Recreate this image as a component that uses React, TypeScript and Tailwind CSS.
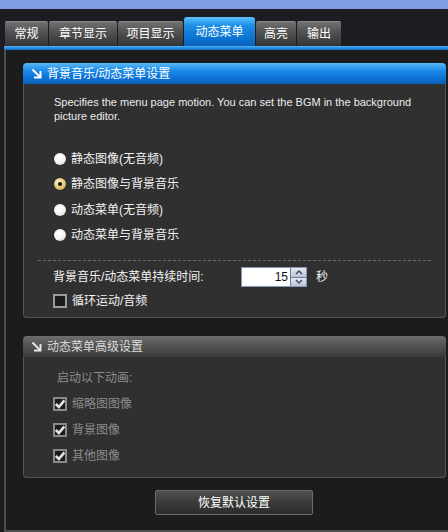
import React from 'react';

const font = { fontFamily: '"Liberation Sans", "Noto Sans CJK SC", sans-serif' };

// 分组标题左边的小箭头
const CornerArrow: React.FC<{ color: string }> = ({ color }) => (
  <svg width="11" height="11" viewBox="0 0 11 11" className="shrink-0">
    <path d="M1.5 1.5 L9 9" stroke={color} strokeWidth="2" fill="none" />
    <path d="M9.5 3 V9.5 H3" stroke={color} strokeWidth="2" fill="none" />
  </svg>
);

const Radio: React.FC<{ label: string; checked?: boolean }> = ({ label, checked }) => (
  <div className="flex items-center h-[25.5px] pl-[30px]">
    {checked ? (
      <div className="w-[12px] h-[12px] rounded-full bg-[radial-gradient(circle_at_40%_35%,#fff6c8,#d8b85a_70%,#9a7d2a)] flex items-center justify-center">
        <div className="w-[4px] h-[4px] rounded-full bg-[#111]" />
      </div>
    ) : (
      <div className="w-[12px] h-[12px] rounded-full bg-[radial-gradient(circle_at_40%_35%,#ffffff,#f2f2f2_55%,#b8b8b8)]" />
    )}
    <span className="ml-[5px] text-[12px] text-[#f2f2f2] leading-none">{label}</span>
  </div>
);

const Check: React.FC<{ label: string; checked?: boolean; dim?: boolean }> = ({ label, checked, dim }) => (
  <div className="flex items-center h-[26px] pl-[29px]">
    <div
      className={`w-[14px] h-[14px] border-2 ${dim ? 'border-[#8a8a8a]' : 'border-[#9c9c9c]'} bg-[#1c1c1c] flex items-center justify-center`}
    >
      {checked && (
        <svg width="10" height="10" viewBox="0 0 10 10">
          <path d="M0.8 5 L3.8 8 L9.4 1.4" stroke={dim ? '#e2e2e2' : '#fff'} strokeWidth="2.6" fill="none" />
        </svg>
      )}
    </div>
    <span className={`ml-[5px] text-[12px] leading-none ${dim ? 'text-[#8c8c8c]' : 'text-[#f2f2f2]'}`}>{label}</span>
  </div>
);

const tabs = ['常规', '章节显示', '项目显示', '动态菜单', '高亮', '输出'];
const tabWidths = ['w-[43px]', 'w-[68px]', 'w-[65px]', 'w-[71px]', 'w-[40px]', 'w-[44px]'];

export default function App() {
  return (
    <div className="w-[448px] h-[532px] bg-[#1d1c22] overflow-hidden flex flex-col" style={font}>
      {/* 窗口标题栏残留 */}
      <div className="h-[9px] bg-[#7f9ee3]" />

      {/* 选项卡 */}
      <div className="h-[37px] flex items-end gap-[1px] pl-[5px]">
        {tabs.map((t, i) =>
          i === 3 ? (
            <div
              key={t}
              className={`${tabWidths[i]} h-[29px] rounded-t-[3px] bg-[linear-gradient(#5cc0ff,#1c8ee6_30%,#0a6fcd_80%,#0b61b8)] flex items-center justify-center text-[12px] text-white`}
            >
              {t}
            </div>
          ) : (
            <div
              key={t}
              className={`${tabWidths[i]} h-[25px] rounded-t-[2px] bg-[linear-gradient(#707070,#4d4d4d_50%,#343434)] border-t border-[#8a8a8a] flex items-center justify-center text-[12px] text-white`}
            >
              {t}
            </div>
          )
        )}
      </div>
      <div className="h-[4px] ml-[4px] bg-[linear-gradient(#4ab0f5,#0b6fcd)]" />

      {/* 主面板 */}
      <div className="flex-1 ml-[4px] border-l-2 border-b-2 border-[#4e4e4e] bg-[#1c1c1c] pl-[17px] pr-[2px] pt-[13px] flex flex-col">
        {/* 背景音乐/动态菜单设置 */}
        <div className="flex flex-col">
          <div className="h-[21px] rounded-t-[4px] bg-[linear-gradient(#5ab8f8,#1d8ce8_35%,#0a6fd3_75%,#0b5fb5)] flex items-center gap-[5px] pl-[8px] text-[12px] text-white">
            <CornerArrow color="#ffffff" />
            <span>背景音乐/动态菜单设置</span>
          </div>
          <div className="h-[234px] bg-[#303030] border border-t-0 border-[#555] rounded-b-[4px] pt-[11px] flex flex-col">
            <p className="pl-[30px] pr-[20px] text-[11px] leading-[14px] text-[#ececec]">
              Specifies the menu page motion. You can set the BGM in the background picture editor.
            </p>
            <div className="mt-[23px] flex flex-col">
              <Radio label="静态图像(无音频)" />
              <Radio label="静态图像与背景音乐" checked />
              <Radio label="动态菜单(无音频)" />
              <Radio label="动态菜单与背景音乐" />
            </div>
            <div className="mt-[12px] mx-[14px] border-t border-dashed border-[#6a6a6a]" />
            <div className="mt-[6px] flex items-center h-[20px] pl-[29px]">
              <span className="w-[188px] text-[12px] text-[#f2f2f2]">背景音乐/动态菜单持续时间:</span>
              <div className="flex h-[20px] border border-[#8797b4] bg-white">
                <div className="w-[48px] flex items-center justify-end pr-[2px] text-[12px] text-[#111]">15</div>
                <div className="w-[16px] flex flex-col border-l border-[#6e7d96]">
                  <div className="flex-1 bg-[linear-gradient(#e4e9f2,#b9c3d4)] border-b border-[#6e7d96] flex items-center justify-center">
                    <svg width="8" height="5" viewBox="0 0 8 5">
                      <path d="M1 4 L4 1 L7 4" stroke="#44506a" strokeWidth="1.5" fill="none" />
                    </svg>
                  </div>
                  <div className="flex-1 bg-[linear-gradient(#e4e9f2,#b9c3d4)] flex items-center justify-center">
                    <svg width="8" height="5" viewBox="0 0 8 5">
                      <path d="M1 1 L4 4 L7 1" stroke="#44506a" strokeWidth="1.5" fill="none" />
                    </svg>
                  </div>
                </div>
              </div>
              <span className="ml-[9px] text-[12px] text-[#f2f2f2]">秒</span>
            </div>
            <div className="mt-[1px]">
              <Check label="循环运动/音频" />
            </div>
          </div>
        </div>

        {/* 动态菜单高级设置 */}
        <div className="mt-[18px] flex flex-col">
          <div className="h-[21px] rounded-t-[4px] bg-[linear-gradient(#6e6e6e,#565656_40%,#444_80%,#3a3a3a)] flex items-center gap-[5px] pl-[8px] text-[12px] text-[#dcdcdc]">
            <CornerArrow color="#e6e6e6" />
            <span>动态菜单高级设置</span>
          </div>
          <div className="h-[121px] bg-[#303030] border border-t-0 border-[#555] rounded-b-[4px] pt-[14px] flex flex-col">
            <span className="pl-[33px] text-[12px] leading-[14px] text-[#8c8c8c]">启动以下动画:</span>
            <div className="mt-[6px] flex flex-col">
              <Check label="缩略图图像" checked dim />
              <Check label="背景图像" checked dim />
              <Check label="其他图像" checked dim />
            </div>
          </div>
        </div>

        <div className="mt-[12px] flex">
          <button className="ml-[132px] w-[158px] h-[25px] rounded-[2px] border border-[#6c6c6c] bg-[linear-gradient(#505050,#3a3a3a_50%,#2c2c2c)] text-[12px] text-white">
            恢复默认设置
          </button>
        </div>
      </div>
    </div>
  );
}
